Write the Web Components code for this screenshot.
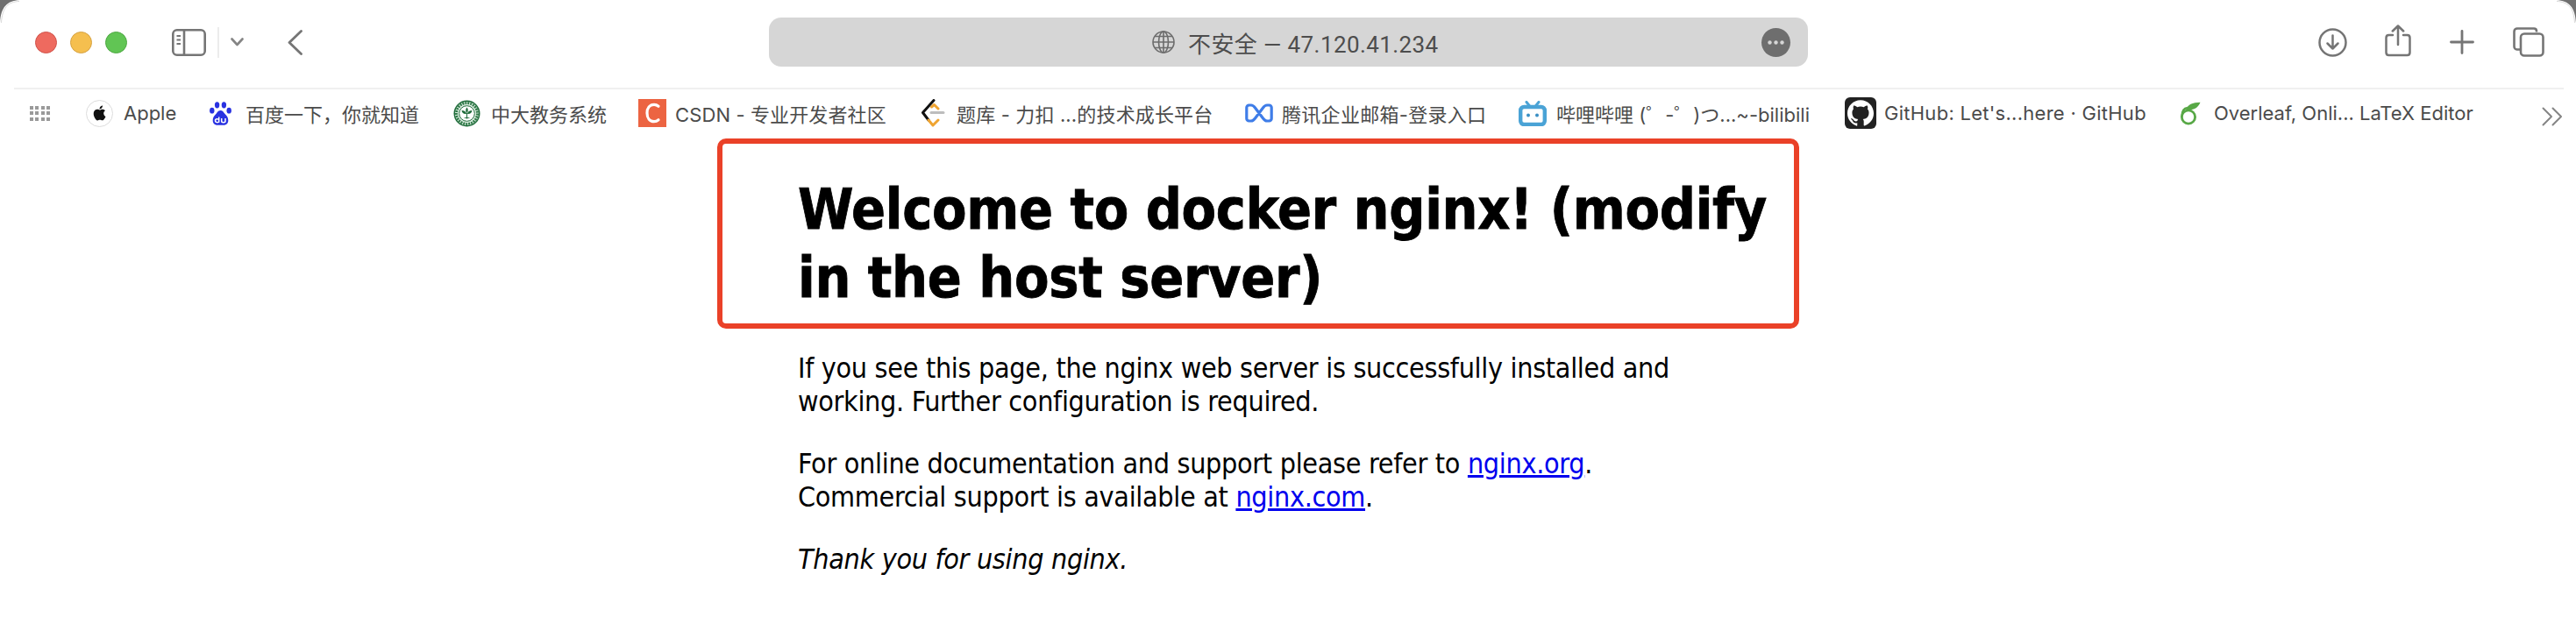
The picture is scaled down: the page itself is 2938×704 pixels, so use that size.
<!DOCTYPE html>
<html lang="zh">
<head>
<meta charset="utf-8">
<title>Welcome to docker nginx!</title>
<style>
  html, body { margin: 0; padding: 0; background: #fff; }
</style>
</head>
<body>

<safari-window>
  <safari-toolbar slot="toolbar" address="不安全 — 47.120.41.234"></safari-toolbar>
  <bookmark-bar slot="bookmarks">
    <bookmark-item style="width:141px;--g:12px">
      <svg slot="icon" width="31" height="31" viewBox="0 0 31 31"><circle cx="15.5" cy="15.5" r="15" fill="#fff" stroke="#dcdcdc"/><g transform="translate(7.2 6.6) scale(.7)"><path fill="#111" d="M12.152 6.896c-.948 0-2.415-1.078-3.96-1.04-2.04.027-3.91 1.183-4.961 3.014-2.117 3.675-.546 9.103 1.519 12.09 1.013 1.454 2.208 3.09 3.792 3.039 1.52-.065 2.09-.987 3.935-.987 1.831 0 2.35.987 3.96.948 1.637-.026 2.676-1.48 3.676-2.948 1.156-1.688 1.636-3.325 1.662-3.415-.039-.013-3.182-1.221-3.22-4.857-.026-3.04 2.48-4.494 2.597-4.559-1.429-2.09-3.623-2.324-4.39-2.376-2-.156-3.675 1.09-4.61 1.09zM15.53 3.83c.843-1.012 1.4-2.427 1.245-3.83-1.207.052-2.662.805-3.532 1.818-.78.896-1.454 2.338-1.273 3.714 1.338.104 2.715-.688 3.559-1.701"/></g></svg>
      Apple
    </bookmark-item>
    <bookmark-item style="width:278px;--g:16px">
      <svg slot="icon" width="25" height="27" viewBox="0 0 25 27"><g fill="#2932e1"><ellipse cx="2.8" cy="10.2" rx="2.7" ry="3.4"/><ellipse cx="8.6" cy="3.8" rx="2.7" ry="3.6"/><ellipse cx="16.4" cy="3.8" rx="2.7" ry="3.6"/><ellipse cx="22.2" cy="10.2" rx="2.7" ry="3.4"/><path d="M12.5 10c-3 0-4 3-6 5-2 2-2.8 4-2.8 6.5 0 3.5 2.6 5.3 5.3 5.3h7c2.7 0 5.3-1.8 5.3-5.3 0-2.5-.8-4.5-2.8-6.5-2-2-3-5-6-5z"/></g><g fill="none" stroke="#fff" stroke-width="1.5"><path d="M10.7 17.5v6.2M10.7 22.2c0 2-4.2 2-4.2-.6 0-2.4 4.2-2.5 4.2-.4"/><path d="M13.7 19v3.2c0 2 4.3 2 4.3 0V19"/></g></svg>
      百度一下&#xFF0C;你就知道
    </bookmark-item>
    <bookmark-item style="width:211px;--g:12px">
      <svg slot="icon" width="31" height="31" viewBox="0 0 31 31"><circle cx="15.5" cy="15.5" r="15" fill="#1f6b3a"/><circle cx="15.5" cy="15.5" r="13.5" fill="#dfeee3"/><circle cx="15.5" cy="15.5" r="12" fill="none" stroke="#2f7a48" stroke-width="3" stroke-dasharray="2 1"/><circle cx="15.5" cy="15.5" r="8.8" fill="#fff" stroke="#1f6b3a"/><path fill="#1f6b3a" d="M15.5 8.5c1.7 2 1.7 4.5 0 6.5-1.7-2-1.7-4.5 0-6.5zM9.5 12c3 0 5 1 5.5 4-3 .5-5-1-5.5-4zM21.5 12c-3 0-5 1-5.5 4 3 .5 5-1 5.5-4zM15 15h1v6.5h-1zM11.5 21c2-1.5 6-1.5 8 0z"/></svg>
      中大教务系统
    </bookmark-item>
    <bookmark-item style="width:322px;--g:10px;letter-spacing:.12px">
      <svg slot="icon" width="32" height="32" viewBox="0 0 32 32"><rect width="32" height="32" fill="#ec6442"/><path fill="none" stroke="#fff" stroke-width="3.2" stroke-linecap="round" d="M23 8.2C21.6 7 19.8 6.3 18 6.3c-5 0-8 4.2-8 9.7s3 9.7 8 9.7c1.8 0 3.6-.7 5-1.9"/></svg>
      CSDN - 专业开发者社区
    </bookmark-item>
    <bookmark-item style="width:370px;--g:13px;letter-spacing:.15px">
      <svg slot="icon" width="28" height="32" viewBox="0 0 28 32"><path fill="none" stroke="#111" stroke-width="3" stroke-linecap="round" stroke-linejoin="round" d="M15 1.5 2.5 15.5 9 24"/><path fill="none" stroke="#efa431" stroke-width="3" stroke-linecap="round" stroke-linejoin="round" d="M12.5 9l3-2.5L20 11M9 24l5 6 6-6"/><path fill="none" stroke="#bdbdbd" stroke-width="3" stroke-linecap="round" d="M12 15.5h14"/></svg>
      题库 - 力扣 ...的技术成长平台
    </bookmark-item>
    <bookmark-item style="width:312px;--g:10px;letter-spacing:.3px">
      <svg slot="icon" width="32" height="22" viewBox="0 0 32 22"><path fill="none" stroke="#3f7de8" stroke-width="3.2" stroke-linejoin="round" d="M7 2H4.5C3 2 1.8 3.2 1.8 4.7v12.600C1.8 18.800 3 20 4.500 20H7c2 0 3-1 4.500-3L20.500 5C22 3 23 2 25 2h2.500c1.500 0 2.700 1.200 2.700 2.700v12.600c0 1.500-1.200 2.700-2.700 2.700H25c-2 0-3-1-4.500-3L11.500 5C10 3 9 2 7 2z"/></svg>
      腾讯企业邮箱-登录入口
    </bookmark-item>
    <bookmark-item style="width:372px;--g:11px">
      <svg slot="icon" width="32" height="29" viewBox="0 0 32 29"><path fill="none" stroke="#4aa3d6" stroke-width="3" stroke-linecap="round" d="M9 1.500 13 6.500M23 1.500 19 6.500"/><rect x="2.2" y="7" width="27.6" height="20" rx="4" fill="#fff" stroke="#4aa3d6" stroke-width="4.4"/><circle cx="11" cy="16.5" r="2" fill="#3a8fc4"/><circle cx="21" cy="16.5" r="2" fill="#3a8fc4"/></svg>
      哔哩哔哩 (゜-゜)つ...~-bilibili
    </bookmark-item>
    <bookmark-item style="width:382px;--g:9px;letter-spacing:.27px">
      <svg slot="icon" width="36" height="36" viewBox="0 0 36 36"><rect width="36" height="36" rx="6" fill="#222"/><g transform="translate(3 3) scale(1.25)"><path fill="#fff" d="M12 .297c-6.630 0-12 5.373-12 12 0 5.303 3.438 9.800 8.205 11.385.6.113.82-.258.82-.577 0-.285-.01-1.040-.015-2.040-3.338.724-4.042-1.610-4.042-1.610C4.422 18.070 3.633 17.700 3.633 17.700c-1.087-.744.084-.729.084-.729 1.205.084 1.838 1.236 1.838 1.236 1.070 1.835 2.809 1.305 3.495.998.108-.776.417-1.305.76-1.605-2.665-.3-5.466-1.332-5.466-5.930 0-1.310.465-2.380 1.235-3.220-.135-.303-.54-1.523.105-3.176 0 0 1.005-.322 3.300 1.230.96-.267 1.980-.399 3-.405 1.020.006 2.040.138 3 .405 2.280-1.552 3.285-1.230 3.285-1.230.645 1.653.24 2.873.12 3.176.765.84 1.230 1.910 1.230 3.220 0 4.610-2.805 5.625-5.475 5.920.42.36.81 1.096.81 2.220 0 1.606-.015 2.896-.015 3.286 0 .315.21.69.825.57C20.565 22.092 24 17.592 24 12.297c0-6.627-5.373-12-12-12"/></g></svg>
      GitHub: Let's...here · GitHub
    </bookmark-item>
    <bookmark-item style="width:413px;--g:15px">
      <svg slot="icon" width="24" height="27" viewBox="0 0 24 27"><circle cx="10" cy="17.5" r="7.6" fill="none" stroke="#58a846" stroke-width="2.8"/><path fill="none" stroke="#58a846" stroke-width="2.4" d="M2.5 17c0-6 2.5-9.500 6.500-10"/><path fill="#58a846" d="M7 9.500C9 3.500 14.500.8 23.500.8 21.500 6 17 10.500 7 9.500z"/></svg>
      Overleaf, Onli... LaTeX Editor
    </bookmark-item>
    <svg style="margin-top:8px" width="24" height="22" viewBox="0 0 24 22" fill="none" stroke="#858585" stroke-width="2" stroke-linecap="round" stroke-linejoin="round"><path d="M1.500 1.500 11 11l-9.500 9.500M12.500 1.500 22 11l-9.500 9.500"/></svg>
  </bookmark-bar>
  <nginx-page slot="content">
    <h1 slot="title">Welcome to docker nginx! (modify in the host server)</h1>
  </nginx-page>
</safari-window>

<script>
class SafariWindow extends HTMLElement {
    constructor() {
        super();
        this.attachShadow({ mode: 'open' });
        this.shadowRoot.innerHTML = `
        <style>
          :host { display: block; position: relative; width: 2938px; height: 704px; overflow: hidden; background: #fff; }
          .corner { position: absolute; top: 0; }
          .corner.l { left: 0; }
          .corner.r { right: 0; transform: scaleX(-1); }
        </style>
        <slot name="toolbar"></slot>
        <slot name="bookmarks"></slot>
        <slot name="content"></slot>
        <svg class="corner l" width="22" height="26" viewBox="0 0 22 26"><path d="M0 0h22C8 1 1 8 0 26z" fill="#6f6f6f"/><path d="M22 1.500C9 2 2.500 9 1.500 26" fill="none" stroke="#d9d9d9" stroke-width="1"/></svg>
        <svg class="corner r" width="22" height="26" viewBox="0 0 22 26"><path d="M0 0h22C8 1 1 8 0 26z" fill="#6f6f6f"/><path d="M22 1.500C9 2 2.500 9 1.500 26" fill="none" stroke="#d9d9d9" stroke-width="1"/></svg>
        `;
    }
}
window.customElements.define('safari-window', SafariWindow);

class SafariToolbar extends HTMLElement {
    constructor() {
        super();
        const address = this.getAttribute('address');
        this.attachShadow({ mode: 'open' });
        this.shadowRoot.innerHTML = `
        <style>
          :host { display: flex; align-items: center; box-sizing: border-box; height: 100px; padding: 0 0 4px 39.5px; }
          svg { display: block; flex: none; }
          .light { width: 25px; height: 25px; border-radius: 50%; box-sizing: border-box; margin-right: 15px; flex: none; }
          .red { background: #ee6a5f; border: 1px solid #d0524a; }
          .yellow { background: #f5bf4f; border: 1px solid #d6a243; }
          .green { background: #61c554; border: 1px solid #4ea843; }
          .address {
            width: 1185.5px; height: 56px; margin-left: 531.5px; border-radius: 14px; background: #d6d6d6; flex: none;
            display: flex; align-items: center; justify-content: center; gap: 15px; position: relative;
            padding-left: 16px; box-sizing: border-box; letter-spacing: .4px;
            font-family: "Roboto", "Noto Sans CJK SC", sans-serif; font-size: 26px; color: #4d4d4d;
          }
          .more { position: absolute; right: 20px; top: 12px; width: 33px; height: 33px; border-radius: 50%; background: #6e6e6e;
                  display: flex; align-items: center; justify-content: center; }
        </style>
        <div class="light red"></div>
        <div class="light yellow"></div>
        <div class="light green" style="margin-right:0"></div>
        <svg style="margin-left:51.5px" width="39" height="31" viewBox="0 0 39 31" fill="none" stroke="#757575" stroke-width="2.6"><rect x="1.3" y="1.3" width="36.4" height="28.4" rx="4.5"/><path d="M14 1.300v28.400"/><path stroke-width="2" d="M5.500 8h4.500M5.500 12.500h4.500M5.500 17h4.500"/></svg>
        <div style="width:2px;height:35px;margin-left:13px;background:#ececec;flex:none"></div>
        <svg style="margin-left:13px" width="15" height="10" viewBox="0 0 15 10" fill="none" stroke="#858585" stroke-width="2.6" stroke-linecap="round" stroke-linejoin="round"><path d="M1.500 1.500 7.500 8l6-6.500"/></svg>
        <svg style="margin-left:50px" width="17" height="29" viewBox="0 0 17 29" fill="none" stroke="#757575" stroke-width="2.8" stroke-linecap="round" stroke-linejoin="round"><path d="M15.500 1.500 2 14.500l13.500 13"/></svg>
        <div class="address">
          <svg width="26" height="26" viewBox="0 0 26 26" fill="none" stroke="#6c6c6c" stroke-width="1.6"><circle cx="13" cy="13" r="12"/><ellipse cx="13" cy="13" rx="5.5" ry="12"/><path d="M13 1v24M1 13h24M3 6.500h20M3 19.500h20"/></svg>
          <span>${address}</span>
          <div class="more"><svg width="19" height="5" viewBox="0 0 19 5" fill="#d6d6d6"><circle cx="2.5" cy="2.5" r="2.2"/><circle cx="9.5" cy="2.5" r="2.2"/><circle cx="16.5" cy="2.5" r="2.2"/></svg></div>
        </div>
        <svg style="margin-left:582px" width="33" height="33" viewBox="0 0 33 33" fill="none" stroke="#757575" stroke-width="2.5" stroke-linecap="round" stroke-linejoin="round"><circle cx="16.5" cy="16.5" r="15"/><path d="M16.500 8.500v15M10.500 17.500l6 6 6-6"/></svg>
        <svg style="margin-left:43px;margin-top:-3px" width="30" height="37" viewBox="0 0 30 37" fill="none" stroke="#757575" stroke-width="2.5" stroke-linecap="round" stroke-linejoin="round"><path d="M9 12H4.500C2.800 12 1.500 13.300 1.500 15v17c0 1.700 1.300 3 3 3h21c1.700 0 3-1.300 3-3V15c0-1.700-1.300-3-3-3H21"/><path d="M15 23V2M8.800 7.500 15 1.500l6.200 6"/></svg>
        <svg style="margin-left:44px" width="28" height="28" viewBox="0 0 28 28" fill="none" stroke="#757575" stroke-width="2.8" stroke-linecap="round"><path d="M14 1.500v25M1.500 14h25"/></svg>
        <svg style="margin-left:44px" width="36" height="34" viewBox="0 0 36 34" fill="none" stroke="#757575" stroke-width="2.6" stroke-linejoin="round"><path d="M27 5.500V4.500C27 2.800 25.700 1.500 24 1.500H5C3.100 1.500 1.500 3.100 1.500 5v17c0 2 1.300 3.500 3 3.500H8"/><rect x="9" y="7.5" width="25.5" height="25" rx="4"/></svg>
        `;
    }
}
window.customElements.define('safari-toolbar', SafariToolbar);

class BookmarkBar extends HTMLElement {
    constructor() {
        super();
        this.attachShadow({ mode: 'open' });
        this.shadowRoot.innerHTML = `
        <style>
          :host { display: block; height: 60px; margin: 0 14px 0 16px; border-top: 2px solid #f0f0f0; box-sizing: border-box; }
          .row { display: flex; align-items: center; height: 54px; padding-left: 18px; }
          .grid { width: 23px; margin-right: 41px; display: grid; grid-template-columns: repeat(4, 4px); gap: 2.5px 2.3px; flex: none; }
          .grid i { display: block; height: 4px; background: #9a9a9a; }
        </style>
        <div class="row">
          <div class="grid">
            <i></i><i></i><i></i><i></i><i></i><i></i><i></i><i></i><i></i><i></i><i></i><i></i>
          </div>
          <slot></slot>
        </div>
        `;
    }
}
window.customElements.define('bookmark-bar', BookmarkBar);

class BookmarkItem extends HTMLElement {
    constructor() {
        super();
        this.attachShadow({ mode: 'open' });
        this.shadowRoot.innerHTML = `
        <style>
          :host { display: flex; align-items: center; flex: none; gap: var(--g, 12px); white-space: nowrap;
                  font-family: "Inter", "Noto Sans CJK SC", sans-serif; font-size: 22px; color: #4b4b4b; }
          ::slotted(svg) { display: block; flex: none; }
        </style>
        <slot name="icon"></slot><span><slot></slot></span>
        `;
    }
}
window.customElements.define('bookmark-item', BookmarkItem);

class NginxPage extends HTMLElement {
    constructor() {
        super();
        this.attachShadow({ mode: 'open' });
        this.shadowRoot.innerHTML = `
        <style>
          :host { display: block; position: relative; font: 32px/38px "DejaVu Sans Condensed", "DejaVu Sans", sans-serif; color: #000; letter-spacing: -.31px; }
          .body { width: 1118px; margin: 0 auto; padding-top: 40px; }
          ::slotted(h1) { font: bold 64px/78px "DejaVu Sans Condensed", "DejaVu Sans", sans-serif; margin: 0 0 45px; letter-spacing: -.3px; -webkit-text-stroke: .8px #000; }
          p { margin: 0 0 33px; }
          a { color: #0000ee; }
          .mark { position: absolute; left: 818px; top: -2px; width: 1234px; height: 217px; box-sizing: border-box;
                  border: 6px solid #ea4128; border-radius: 10px; }
        </style>
        <div class="body">
          <slot name="title"></slot>
          <p>If you see this page, the nginx web server is successfully installed and<br>working. Further configuration is required.</p>
          <p>For online documentation and support please refer to <a href="#">nginx.org</a>.<br>Commercial support is available at <a href="#">nginx.com</a>.</p>
          <p><em>Thank you for using nginx.</em></p>
        </div>
        <div class="mark"></div>
        `;
    }
}
window.customElements.define('nginx-page', NginxPage);
</script>
</body>
</html>
